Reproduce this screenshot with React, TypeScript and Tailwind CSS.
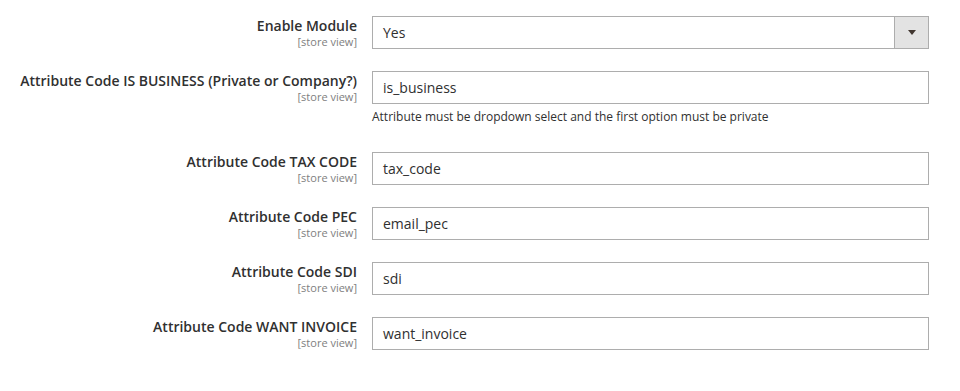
import React from 'react';

type Field = {
  label: string;
  value: string;
  select?: boolean;
  note?: string;
};

const fields: Field[] = [
  { label: 'Enable Module', value: 'Yes', select: true },
  {
    label: 'Attribute Code IS BUSINESS (Private or Company?)',
    value: 'is_business',
    note: 'Attribute must be dropdown select and the first option must be private',
  },
  { label: 'Attribute Code TAX CODE', value: 'tax_code' },
  { label: 'Attribute Code PEC', value: 'email_pec' },
  { label: 'Attribute Code SDI', value: 'sdi' },
  { label: 'Attribute Code WANT INVOICE', value: 'want_invoice' },
];

const FieldRow = ({ field }: { field: Field }) => (
  <div className="flex">
    <div className="w-[357px] flex-none text-right">
      <div className="text-[14px] leading-5 font-semibold text-[#303030]">
        {field.label}
      </div>
      <div className="text-[11px] leading-3 text-[#808080]">[store view]</div>
    </div>
    <div className="ml-[15px] w-[557px] flex-none">
      <div className="h-[33px] flex border border-[#adadad] bg-white">
        <div className="flex-1 flex items-center px-[10px] text-[14px] leading-5 text-[#303030]">
          {field.value}
        </div>
        {field.select && (
          <div className="w-[34px] flex-none flex items-center justify-center border-l border-[#adadad] bg-[#e3e3e3]">
            <span className="block w-0 h-0 border-l-4 border-r-4 border-t-[5px] border-l-transparent border-r-transparent border-t-[#41362f]" />
          </div>
        )}
      </div>
      {field.note && (
        <div className="mt-[5px] mb-[5px] text-[12px] leading-4 text-[#303030]">
          {field.note}
        </div>
      )}
    </div>
  </div>
);

export default function App() {
  return (
    <div
      className="w-[960px] h-[391px] bg-white pt-4 flex flex-col gap-[22px]"
      style={{ fontFamily: '"Open Sans", "Noto Sans", sans-serif' }}
    >
      {fields.map((f) => (
        <FieldRow key={f.label} field={f} />
      ))}
    </div>
  );
}
